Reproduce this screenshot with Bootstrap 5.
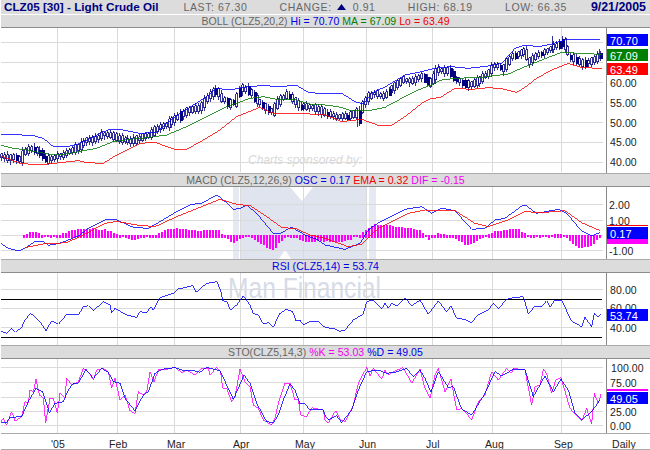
<!DOCTYPE html>
<html lang="en">
<head>
<meta charset="utf-8">
<title>CLZ05 chart</title>
<link href="https://cdn.jsdelivr.net/npm/bootstrap@5.3.0/dist/css/bootstrap.min.css" rel="stylesheet">
<style>
html,body{margin:0;padding:0;background:#fff;overflow:hidden}
body{width:650px;height:450px;font-family:"Liberation Sans",Arial,sans-serif;font-size:11px;line-height:1}
.chartwrap{width:650px;height:450px}
.wm{position:absolute;left:0;top:0;z-index:0;pointer-events:none}
.layer{position:relative;z-index:1}
.topbar{height:14px;margin:0 0 1px 1px;background:#dcdcdc;color:#666;padding:0 4px 0 3px}
.ttl{font-size:11.7px;font-weight:700;color:#000080}
.dte{font-size:12.4px;font-weight:700;color:#000080}
.stats{margin:0 24px 0 25px;font-size:10.5px;letter-spacing:.6px}
.tri{display:inline-block;width:9px;height:6px;margin:0 3px 1px 2px}
.strip{background:#dcdcdc;color:#666;margin-left:1px;height:14px;border-top:1px solid #aaa;border-bottom:1px solid #8c8c8c;line-height:12px;font-size:10.5px;letter-spacing:.05px;white-space:pre}
.strip.first{height:13px;border-top:0}
.c-b{color:#0000e6}.c-g{color:#008000}.c-r{color:#f00000}.c-m{color:#f000f0}
svg.pane{display:block;width:650px}
.gridl{stroke:#dadada;stroke-width:1;shape-rendering:crispEdges;fill:none}
.ln{fill:none;stroke-width:.8;vector-effect:non-scaling-stroke;shape-rendering:crispEdges}
.b{stroke:#0000ff}.g{stroke:#007a00}.r{stroke:#ff0000}.m{stroke:#ff00ff}
.lab{font:10.5px "Liberation Sans",Arial,sans-serif;letter-spacing:.1px;fill:#222}
.flagt{font:11px "Liberation Sans",Arial,sans-serif;letter-spacing:.1px;fill:#fff}
.xaxis{height:17px;margin-left:1px;border-top:1px solid #aaa;border-bottom:1px solid #aaa}
.wmt{font:italic 13px "Liberation Sans",Arial,sans-serif;fill:#d8d8d8}
.wmf{font:29px "Liberation Sans",Arial,sans-serif;fill:#d6dbe7}
</style>
</head>
<body>
<div class="chartwrap position-relative d-flex flex-column">
<svg class="wm" width="650" height="450" viewBox="0 0 650 450" aria-hidden="true">
  <polygon fill="#e0e4ee" points="241,187 290,187 302,201 313,187 367,187 367,272 300,272 285,250 270,272 241,272"/>
  <rect x="233" y="187" width="6" height="85" fill="#e6e9f1"/>
  <rect x="369" y="187" width="7" height="85" fill="#e6e9f1"/>
  <text class="wmt" x="248" y="164" textLength="114" lengthAdjust="spacingAndGlyphs">Charts sponsored by:</text>
  <text class="wmf" x="228" y="298" textLength="153" lengthAdjust="spacingAndGlyphs">Man Financial</text>
</svg>

<div class="layer d-flex justify-content-between align-items-center topbar">
  <span class="ttl">CLZ05 [30] - Light Crude Oil</span>
  <div class="stats flex-grow-1 d-flex justify-content-between">
    <span>LAST: 67.30</span><span>CHANGE: <svg class="tri" viewBox="0 0 9 6" aria-hidden="true"><polygon points="4.5,0 9,6 0,6" fill="#000080"/></svg> 0.91</span><span>HIGH: 68.19</span><span>LOW: 66.35</span>
  </div>
  <span class="dte">9/21/2005</span>
</div>

<div class="layer strip first text-center">BOLL (CLZ5,20,2) <span class="c-b">Hi = 70.70</span> <span class="c-g">MA = 67.09</span> <span class="c-r">Lo = 63.49</span></div>
<svg class="layer pane" height="145" viewBox="0 28 650 145">
  <path class="gridl" d="M57.5 28V172M117.5 28V172M174.5 28V172M240.5 28V172M303.5 28V172M366.5 28V172M432.5 28V172M492.5 28V172M561.5 28V172M1 42.5H603M1 62.5H603M1 82.5H603M1 102.5H603M1 122.5H603M1 142.5H603M1 162.5H603"/>
  <g transform="scale(.33333)">
    <path id="wicks" class="ln" stroke="#000080"/>
    <path id="hollow" class="ln" stroke="#000080" style="fill:#fff"/>
    <path id="cfill" fill="#000080" shape-rendering="crispEdges"/>
    <polyline class="ln b" points="3,405 30,403 100,407 130,415 160,440 200,440 235,432 260,420 300,400 330,388 370,390 420,400 470,397 500,370 540,340 580,315 620,290 650,265 690,270 730,262 790,256 830,260 890,256 925,277 975,282 1025,280 1065,305 1090,312 1115,280 1160,258 1215,225 1265,215 1305,205 1355,200 1405,205 1465,198 1505,190 1545,145 1575,135 1615,140 1655,132 1695,120 1800,120"/>
    <polyline class="ln g" points="3,436 40,445 80,450 150,463 200,462 245,453 290,445 340,425 390,418 450,412 500,405 560,380 620,350 680,320 750,295 790,290 830,298 880,297 930,312 975,315 1015,320 1055,332 1105,332 1155,322 1205,295 1255,270 1285,258 1325,240 1365,235 1445,232 1475,228 1525,222 1575,200 1625,180 1685,157 1735,160 1805,163"/>
    <polyline class="ln r" points="3,468 60,490 120,495 180,488 235,482 260,488 310,490 350,465 420,430 465,427 520,447 560,448 610,420 660,390 710,350 780,322 820,340 900,340 975,345 1025,365 1085,358 1135,376 1175,376 1215,350 1265,310 1295,295 1320,293 1365,265 1415,268 1465,263 1505,266 1550,277 1575,262 1610,235 1655,210 1705,190 1745,203 1805,205"/>
  </g>
  <line x1="606" x2="606" y1="28" y2="173" stroke="#888" shape-rendering="crispEdges"/>
  <text class="lab" x="610" y="87">60.00</text><text class="lab" x="610" y="107">55.00</text><text class="lab" x="610" y="127">50.00</text><text class="lab" x="610" y="146">45.00</text><text class="lab" x="610" y="166">40.00</text>
  <rect x="607" y="34" width="41" height="12" fill="#0000ff"/><text class="flagt" x="610" y="44.5">70.70</text>
  <rect x="607" y="49" width="41" height="12" fill="#008000"/><text class="flagt" x="610" y="59.5">67.09</text>
  <rect x="607" y="63" width="41" height="12" fill="#ff0000"/><text class="flagt" x="610" y="73.5">63.49</text>
</svg>

<div class="layer strip text-center">MACD (CLZ5,12,26,9) <span class="c-b">OSC = 0.17</span> <span class="c-r">EMA = 0.32</span> <span class="c-m">DIF = -0.15</span></div>
<svg class="layer pane" height="72" viewBox="0 187 650 72">
  <path class="gridl" d="M57.5 187V259M117.5 187V259M174.5 187V259M240.5 187V259M303.5 187V259M366.5 187V259M432.5 187V259M492.5 187V259M561.5 187V259M1 204.5H603M1 220.5H603M1 235.5H603M1 250.5H603"/>
  <g transform="translate(0,170) scale(.33333)">
    <path id="hist" class="ln m" style="stroke-width:2px"/>
    <polyline class="ln b" points="3,220 25,235 55,243 75,235 105,214 130,214 145,226 175,221 200,212 240,195 265,175 320,147 350,150 400,172 445,175 480,155 530,125 575,103 605,100 650,75 665,85 700,118 720,115 740,105 770,130 820,190 840,190 875,172 915,195 950,208 975,225 1035,238 1080,220 1105,180 1125,165 1155,148 1215,118 1265,110 1295,130 1325,115 1365,122 1415,178 1455,175 1485,150 1515,145 1565,108 1580,108 1610,130 1675,118 1700,130 1745,183 1775,198 1801,187"/>
    <polyline class="ln r" points="75,233 130,222 200,218 250,195 315,160 350,154 410,165 465,170 530,140 600,112 660,88 710,103 750,107 800,140 845,172 890,177 930,195 975,205 1045,230 1085,222 1135,175 1225,130 1275,120 1365,122 1425,160 1465,170 1525,150 1575,125 1625,128 1695,122 1745,158 1801,182"/>
  </g>
  <line x1="606" x2="606" y1="187" y2="259" stroke="#888" shape-rendering="crispEdges"/>
  <text class="lab" x="609" y="209">2.00</text><text class="lab" x="609" y="225">1.00</text><text class="lab" x="609" y="255">-1.00</text>
  <rect x="607" y="225" width="41" height="1" fill="#ff0000"/>
  <rect x="607" y="239" width="41" height="5" fill="#ff00ff"/>
  <rect x="607" y="227" width="41" height="12" fill="#0000ff"/><text class="flagt" x="610" y="237.5">0.17</text>
</svg>

<div class="layer strip text-center c-b">RSI (CLZ5,14) = 53.74</div>
<svg class="layer pane" height="72" viewBox="0 273 650 72">
  <path class="gridl" d="M57.5 273V345M117.5 273V345M174.5 273V345M240.5 273V345M303.5 273V345M366.5 273V345M432.5 273V345M492.5 273V345M561.5 273V345M1 289.5H603M1 308.5H603M1 327.5H603"/>
  <path d="M1 299.5H602M1 337.5H602" stroke="#000" fill="none" shape-rendering="crispEdges"/>
  <g transform="translate(0,170) scale(.33333)">
    <polyline class="ln b" points="3,483 20,490 35,475 47,487 65,472 75,450 92,430 120,455 138,482 155,452 175,463 200,433 235,435 250,410 265,407 280,422 310,395 330,405 335,428 345,415 380,435 410,442 420,425 440,428 452,410 460,420 480,383 520,370 535,357 578,347 588,367 620,340 650,335 662,360 668,392 680,395 692,420 710,405 730,377 750,405 760,430 775,435 790,462 805,458 820,472 838,432 858,418 878,425 888,452 900,450 910,465 930,455 955,455 975,472 1005,477 1020,484 1035,480 1060,450 1090,432 1100,395 1120,390 1145,417 1155,400 1165,415 1175,400 1190,408 1215,383 1235,408 1260,390 1285,433 1315,393 1340,425 1353,408 1370,445 1395,448 1413,458 1435,435 1465,420 1480,400 1495,416 1520,388 1540,383 1570,380 1585,432 1605,408 1625,410 1640,392 1650,412 1665,390 1685,392 1715,453 1745,470 1755,442 1775,470 1783,430 1795,442 1803,432"/>
  </g>
  <line x1="606" x2="606" y1="273" y2="345" stroke="#888" shape-rendering="crispEdges"/>
  <text class="lab" x="610" y="294">80.00</text><text class="lab" x="610" y="312">60.00</text><text class="lab" x="610" y="332">40.00</text>
  <rect x="607" y="309" width="41" height="12" fill="#0000ff"/><text class="flagt" x="610" y="319.5">53.74</text>
</svg>

<div class="layer strip text-center">STO(CLZ5,14,3) <span class="c-m">%K = 53.03</span> <span class="c-b">%D = 49.05</span></div>
<svg class="layer pane" height="74" viewBox="0 359 650 74">
  <path class="gridl" d="M57.5 359V433M117.5 359V433M174.5 359V433M240.5 359V433M303.5 359V433M366.5 359V433M432.5 359V433M492.5 359V433M561.5 359V433M1 367.5H603M1 382.5H603M1 397.5H603M1 411.5H603M1 425.5H603"/>
  <g transform="translate(0,340) scale(.33333)">
    <polyline class="ln m" points="3,245 10,235 20,255 35,215 45,243 65,230 75,185 85,190 90,150 100,155 108,118 118,165 130,175 137,248 150,175 160,175 172,220 180,160 195,175 200,115 215,135 235,125 250,85 265,95 280,120 290,90 310,85 325,95 335,145 345,115 360,180 375,165 390,212 405,220 415,155 430,165 440,155 450,95 462,125 475,90 490,90 525,82 545,98 560,90 585,105 605,85 625,85 630,105 650,82 662,95 668,145 680,145 695,185 705,170 720,88 735,125 750,140 760,195 775,205 790,240 815,255 825,235 835,190 855,130 870,130 885,180 895,180 902,225 920,230 935,203 970,210 975,240 985,250 995,232 1007,212 1020,238 1035,245 1050,215 1060,195 1075,130 1100,82 1110,108 1120,85 1145,118 1155,90 1165,105 1180,95 1210,83 1235,130 1260,88 1275,145 1290,175 1305,105 1315,85 1335,155 1353,118 1370,210 1385,205 1395,215 1415,240 1435,185 1455,165 1475,95 1495,120 1520,85 1535,100 1540,85 1575,90 1595,195 1605,140 1620,135 1630,88 1640,100 1655,160 1667,120 1683,113 1710,205 1745,243 1760,205 1775,253 1783,160 1795,190 1803,163"/>
    <polyline class="ln b" points="3,247 20,247 30,232 65,230 85,185 108,145 128,155 148,218 165,190 190,185 205,150 220,130 235,130 258,88 280,115 305,85 325,97 340,125 360,130 375,175 405,213 430,165 445,155 465,100 485,88 525,83 545,90 580,92 600,97 620,82 660,92 680,135 700,178 715,145 732,105 750,130 770,190 800,245 820,248 835,225 850,180 870,132 885,150 900,192 915,192 930,210 970,210 975,225 985,240 1010,227 1025,248 1055,210 1075,150 1100,95 1135,90 1160,100 1185,97 1220,85 1240,110 1260,90 1275,115 1293,157 1315,95 1345,142 1360,140 1385,207 1415,225 1455,160 1485,95 1505,108 1540,88 1575,90 1600,170 1635,108 1660,155 1683,117 1705,150 1725,220 1745,240 1775,215 1800,180"/>
  </g>
  <line x1="606" x2="606" y1="359" y2="433" stroke="#888" shape-rendering="crispEdges"/>
  <text class="lab" x="611" y="372">100.00</text><text class="lab" x="610" y="387">75.00</text><text class="lab" x="610" y="416">25.00</text><text class="lab" x="610" y="430">0.00</text>
  <rect x="607" y="389" width="41" height="2" fill="#ff00ff"/>
  <rect x="607" y="392" width="41" height="12" fill="#0000ff"/><text class="flagt" x="610" y="402.5">49.05</text>
</svg>

<div class="layer xaxis">
  <svg class="pane" height="15" viewBox="0 434 650 15">
    <text class="lab" x="50" y="448">'05</text><text class="lab" x="108" y="448">Feb</text><text class="lab" x="166" y="448">Mar</text><text class="lab" x="232" y="448">Apr</text><text class="lab" x="294" y="448">May</text><text class="lab" x="358" y="448">Jun</text><text class="lab" x="425" y="448">Jul</text><text class="lab" x="484" y="448">Aug</text><text class="lab" x="553" y="448">Sep</text><text class="lab" x="611" y="448">Daily</text>
  </svg>
</div>
</div>

<script>
(function(){
  function interp(k,x){
    for(var i=1;i<k.length;i++){ if(x<=k[i][0]){var a=k[i-1],b=k[i];return a[1]+(b[1]-a[1])*(x-a[0])/(b[0]-a[0]);} }
    return k[k.length-1][1];
  }
  function rnd(i){var s=Math.sin(i*12.9898+4.1)*43758.5453;return s-Math.floor(s);}
  var mid=[[3,468],[25,475],[45,472],[60,480],[75,455],[95,445],[115,455],[130,465],[140,482],[165,472],[190,465],[215,452],[240,440],[262,420],[285,420],[310,403],[335,408],[360,418],[395,425],[420,415],[450,405],[475,385],[510,368],[535,350],[570,330],[600,325],[625,290],[650,270],[665,295],[690,312],[710,300],[720,265],[745,270],[770,300],[800,325],[820,335],[835,305],[860,285],[880,300],[900,320],[940,322],[975,340],[1005,350],[1045,350],[1070,340],[1073,365],[1085,325],[1100,295],[1125,280],[1150,290],[1175,268],[1210,240],[1235,245],[1265,228],[1290,250],[1315,210],[1350,215],[1370,240],[1405,255],[1435,245],[1465,220],[1485,195],[1510,205],[1535,170],[1575,155],[1587,185],[1615,165],[1655,145],[1690,125],[1710,170],[1745,190],[1775,185],[1803,165]];
  var w='',d='',f='',i=0;
  for(var x=4;x<=1803;x+=8.8,i++){
    var m=interp(mid,x),slope=interp(mid,x+8.8)-m;
    var h=3+rnd(i)*7+Math.abs(slope)*.5;
    var down=(slope>2&&rnd(i+300)<.55)||rnd(i+300)<.1;
    var px=Math.round(x/3)*3;
    var top=Math.round((m-h)/3)*3,bot=Math.round((m+h)/3)*3;
    w+='M'+(px+3)+' '+(top-3-rnd(i+50)*8)+'V'+(bot+3+rnd(i+90)*8);
    if(down){f+='M'+px+' '+top+'h9V'+(bot+3)+'h-9z';}
    else{d+='M'+px+' '+top+'h6V'+bot+'h-6z';}
  }
  w+='M1073 328V380M1657 108V160M1800 148V178';
  document.getElementById('wicks').setAttribute('d',w);
  document.getElementById('hollow').setAttribute('d',d);
  document.getElementById('cfill').setAttribute('d',f);
  var hk=[[70,200],[90,185],[110,185],[130,197],[175,195],[210,183],[270,175],[320,180],[350,192],[400,208],[440,200],[470,195],[490,180],[540,175],[600,182],[655,178],[670,195],[700,218],[730,198],[750,197],[800,230],[820,237],[850,205],[870,197],[920,212],[975,212],[1035,212],[1075,195],[1125,163],[1215,172],[1265,182],[1285,205],[1315,190],[1355,197],[1405,225],[1455,198],[1485,185],[1555,175],[1585,197],[1655,197],[1685,190],[1735,230],[1775,225],[1801,195]];
  var h2='';
  for(var x2=72;x2<=1803;x2+=9){
    var px2=Math.round(x2/3)*3, t=Math.round(interp(hk,x2)+(rnd(x2)*4-2));
    if(t<197){h2+='M'+px2+' 203V'+t;}else{h2+='M'+px2+' 194V'+(t+3);}
  }
  document.getElementById('hist').setAttribute('d',h2);
})();
</script>
<script src="https://cdn.jsdelivr.net/npm/bootstrap@5.3.0/dist/js/bootstrap.bundle.min.js"></script>
</body>
</html>
